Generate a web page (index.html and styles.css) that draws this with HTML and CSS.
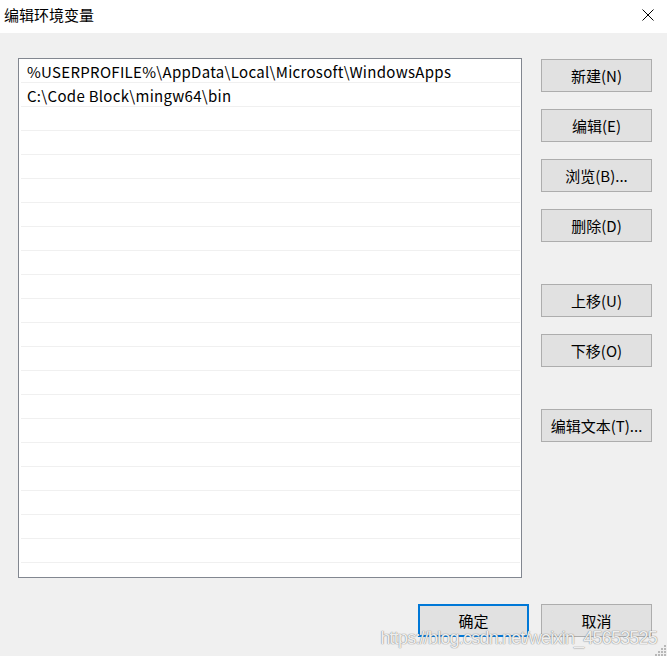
FILE: index.html
```html
<!DOCTYPE html>
<html lang="zh-CN">
<head>
<meta charset="utf-8">
<title>编辑环境变量</title>
<link rel="stylesheet" href="styles.css">
</head>
<body>
<div class="window">
  <div class="titlebar">
    <span class="title">编辑环境变量</span>
    <svg class="close" width="12" height="12" viewBox="0 0 12 12"><path d="M0.5 0.5 L11.5 11.5 M11.5 0.5 L0.5 11.5" stroke="#000" stroke-width="1" fill="none"/></svg>
  </div>
  <div class="content">
    <div class="main">
      <div class="listbox">
        <div class="row">%USERPROFILE%\AppData\Local\Microsoft\WindowsApps</div>
        <div class="row">C:\Code Block\mingw64\bin</div>
        <div class="row"></div><div class="row"></div><div class="row"></div><div class="row"></div>
        <div class="row"></div><div class="row"></div><div class="row"></div><div class="row"></div>
        <div class="row"></div><div class="row"></div><div class="row"></div><div class="row"></div>
        <div class="row"></div><div class="row"></div><div class="row"></div><div class="row"></div>
        <div class="row"></div><div class="row"></div><div class="row"></div><div class="row"></div>
      </div>
      <div class="side">
        <div class="group">
          <button class="btn">新建(N)</button>
          <button class="btn">编辑(E)</button>
          <button class="btn">浏览(B)...</button>
          <button class="btn">删除(D)</button>
        </div>
        <div class="group">
          <button class="btn">上移(U)</button>
          <button class="btn">下移(O)</button>
        </div>
        <div class="group">
          <button class="btn">编辑文本(T)...</button>
        </div>
      </div>
    </div>
    <div class="footer">
      <button class="btn default">确定</button>
      <button class="btn">取消</button>
    </div>
    <div class="watermark">https://blog.csdn.net/weixin_45653525</div>
    <svg class="grip" width="12" height="12" viewBox="0 0 12 12">
      <rect x="9" y="1" width="2" height="2" fill="#b8b8b8"/>
      <rect x="6" y="4" width="2" height="2" fill="#b8b8b8"/>
      <rect x="9" y="4" width="2" height="2" fill="#b8b8b8"/>
      <rect x="3" y="7" width="2" height="2" fill="#b8b8b8"/>
      <rect x="6" y="7" width="2" height="2" fill="#b8b8b8"/>
      <rect x="9" y="7" width="2" height="2" fill="#b8b8b8"/>
      <rect x="0" y="10" width="2" height="2" fill="#b8b8b8"/>
      <rect x="3" y="10" width="2" height="2" fill="#b8b8b8"/>
      <rect x="6" y="10" width="2" height="2" fill="#b8b8b8"/>
      <rect x="9" y="10" width="2" height="2" fill="#b8b8b8"/>
    </svg>
  </div>
</div>
</body>
</html>
```
FILE: styles.css
```css
html, body {
  margin: 0;
  padding: 0;
}
body {
  width: 667px;
  height: 656px;
  overflow: hidden;
  font-family: "Noto Sans CJK SC", "Noto Sans", sans-serif;
  font-size: 15px;
  color: #000;
  background: #f0f0f0;
}
.window {
  display: flex;
  flex-direction: column;
  height: 656px;
}
.titlebar {
  height: 33px;
  background: #fff;
  display: flex;
  align-items: center;
  justify-content: space-between;
  padding: 0 13px 0 4px;
  box-sizing: border-box;
}
.title {
  line-height: 1;
  margin-top: -4px;
}
.close {
  margin-top: -4px;
}
.content {
  position: relative;
  flex: 1;
  padding: 25px 0 0 18px;
}
.main {
  display: flex;
  gap: 19px;
}
.listbox {
  width: 504px;
  height: 520px;
  box-sizing: border-box;
  border: 1px solid #828790;
  background: #fff;
  overflow: hidden;
}
.row {
  height: 24px;
  box-sizing: border-box;
  border-bottom: 1px solid #f0f0f0;
  margin: 0 1px 0 2px;
  padding-left: 6px;
  line-height: 25px;
  letter-spacing: 0.3px;
  white-space: nowrap;
}
.side {
  display: flex;
  flex-direction: column;
  gap: 42px;
  padding-top: 1px;
}
.group {
  display: flex;
  flex-direction: column;
  gap: 17px;
}
.btn {
  width: 111px;
  height: 33px;
  box-sizing: border-box;
  background: #e1e1e1;
  border: 1px solid #adadad;
  font-family: inherit;
  font-size: 15px;
  color: #000;
  padding: 0;
  margin: 0;
  line-height: 1;
}
.btn.default {
  border: 2px solid #0078d7;
}
.footer {
  display: flex;
  gap: 12px;
  justify-content: flex-end;
  padding-right: 15px;
  margin-top: 26px;
}
.watermark {
  position: absolute;
  right: 10px;
  bottom: 8px;
  font-family: "Liberation Sans", sans-serif;
  font-size: 18px;
  line-height: 20px;
  letter-spacing: -0.8px;
  color: rgba(255, 255, 255, 0.9);
  text-shadow: 0 0 1px rgba(110, 110, 110, 0.9), 0 0 1px rgba(110, 110, 110, 0.6);
}
.grip {
  position: absolute;
  right: 0;
  bottom: 0;
}
```
